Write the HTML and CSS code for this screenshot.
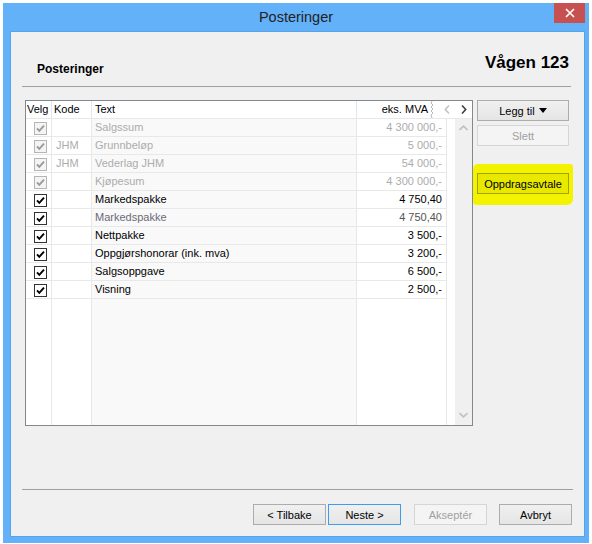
FILE: index.html
```html
<!DOCTYPE html>
<html>
<head>
<meta charset="utf-8">
<link rel="stylesheet" href="styles.css">
</head>
<body>
<div class="window">
  <div class="titlebar">
    <span class="title">Posteringer</span>
    <div class="close"><svg width="10" height="10" viewBox="0 0 10 10"><path d="M1 1 L9 9 M9 1 L1 9" stroke="#fff" stroke-width="1.7" fill="none"/></svg></div>
  </div>
  <div class="client">
    <div class="head">
      <div class="label">Posteringer</div>
      <div class="name">Vågen 123</div>
    </div>
    <div class="main">
      <div class="grid">
        <div class="ghead">
          <div class="hc h-velg">Velg</div>
          <div class="hc h-kode">Kode</div>
          <div class="hc h-text">Text</div>
          <div class="hc h-mva"><span>eks. MVA</span><svg class="wavy" width="4" height="17" viewBox="0 0 4 17"><path d="M2 0 L1 2 L3 4 L1 6 L3 8 L1 10 L3 12 L1 14 L2 17" stroke="#b8b8b8" stroke-width="1" fill="none"/></svg></div>
          <div class="h-nav">
            <svg width="6" height="9" viewBox="0 0 6 9"><path d="M5 0.5 L1.3 4.5 L5 8.5" stroke="#c4c4c4" stroke-width="1.6" fill="none"/></svg>
            <svg width="6" height="9" viewBox="0 0 6 9"><path d="M1 0.5 L4.7 4.5 L1 8.5" stroke="#404040" stroke-width="1.6" fill="none"/></svg>
          </div>
        </div>
        <div class="gbody">
          <div class="rows">
            <div class="row dis"><div class="c-velg"><svg class="cb" viewBox="0 0 13 13"><rect x="0.5" y="0.5" width="12" height="12"/><path d="M3 6.3 L5.3 8.8 L10 3.6"/></svg></div><div class="c-kode"></div><div class="c-text">Salgssum</div><div class="c-mva">4 300 000,-</div></div>
            <div class="row dis"><div class="c-velg"><svg class="cb" viewBox="0 0 13 13"><rect x="0.5" y="0.5" width="12" height="12"/><path d="M3 6.3 L5.3 8.8 L10 3.6"/></svg></div><div class="c-kode">JHM</div><div class="c-text">Grunnbeløp</div><div class="c-mva">5 000,-</div></div>
            <div class="row dis"><div class="c-velg"><svg class="cb" viewBox="0 0 13 13"><rect x="0.5" y="0.5" width="12" height="12"/><path d="M3 6.3 L5.3 8.8 L10 3.6"/></svg></div><div class="c-kode">JHM</div><div class="c-text">Vederlag JHM</div><div class="c-mva">54 000,-</div></div>
            <div class="row dis"><div class="c-velg"><svg class="cb" viewBox="0 0 13 13"><rect x="0.5" y="0.5" width="12" height="12"/><path d="M3 6.3 L5.3 8.8 L10 3.6"/></svg></div><div class="c-kode"></div><div class="c-text">Kjøpesum</div><div class="c-mva">4 300 000,-</div></div>
            <div class="row"><div class="c-velg"><svg class="cb" viewBox="0 0 13 13"><rect x="0.5" y="0.5" width="12" height="12"/><path d="M3 6.3 L5.3 8.8 L10 3.6"/></svg></div><div class="c-kode"></div><div class="c-text">Markedspakke</div><div class="c-mva">4 750,40</div></div>
            <div class="row semi"><div class="c-velg"><svg class="cb" viewBox="0 0 13 13"><rect x="0.5" y="0.5" width="12" height="12"/><path d="M3 6.3 L5.3 8.8 L10 3.6"/></svg></div><div class="c-kode"></div><div class="c-text">Markedspakke</div><div class="c-mva">4 750,40</div></div>
            <div class="row"><div class="c-velg"><svg class="cb" viewBox="0 0 13 13"><rect x="0.5" y="0.5" width="12" height="12"/><path d="M3 6.3 L5.3 8.8 L10 3.6"/></svg></div><div class="c-kode"></div><div class="c-text">Nettpakke</div><div class="c-mva">3 500,-</div></div>
            <div class="row"><div class="c-velg"><svg class="cb" viewBox="0 0 13 13"><rect x="0.5" y="0.5" width="12" height="12"/><path d="M3 6.3 L5.3 8.8 L10 3.6"/></svg></div><div class="c-kode"></div><div class="c-text">Oppgjørshonorar (ink. mva)</div><div class="c-mva">3 200,-</div></div>
            <div class="row"><div class="c-velg"><svg class="cb" viewBox="0 0 13 13"><rect x="0.5" y="0.5" width="12" height="12"/><path d="M3 6.3 L5.3 8.8 L10 3.6"/></svg></div><div class="c-kode"></div><div class="c-text">Salgsoppgave</div><div class="c-mva">6 500,-</div></div>
            <div class="row"><div class="c-velg"><svg class="cb" viewBox="0 0 13 13"><rect x="0.5" y="0.5" width="12" height="12"/><path d="M3 6.3 L5.3 8.8 L10 3.6"/></svg></div><div class="c-kode"></div><div class="c-text">Visning</div><div class="c-mva">2 500,-</div></div>
          </div>
          <div class="vscroll">
            <svg width="9" height="6" viewBox="0 0 9 6"><path d="M0.5 5 L4.5 1.2 L8.5 5" stroke="#c0c0c0" stroke-width="1.6" fill="none"/></svg>
            <svg width="9" height="6" viewBox="0 0 9 6"><path d="M0.5 1 L4.5 4.8 L8.5 1" stroke="#c0c0c0" stroke-width="1.6" fill="none"/></svg>
          </div>
        </div>
      </div>
      <div class="side">
        <button class="btn">Legg til <span class="tri"></span></button>
        <button class="btn disabled slett">Slett</button>
        <div class="hl"><button class="btn hlbtn">Oppdragsavtale</button></div>
      </div>
    </div>
    <div class="foot-sep"></div>
    <div class="foot">
      <button class="btn fb tilbake">&lt; Tilbake</button>
      <button class="btn fb neste">Neste &gt;</button>
      <button class="btn fb disabled aksepter">Akseptér</button>
      <button class="btn fb">Avbryt</button>
    </div>
  </div>
</div>
</body>
</html>
```

FILE: styles.css
```css
* { box-sizing: border-box; }
html, body { margin: 0; padding: 0; }
body {
  width: 592px;
  height: 544px;
  overflow: hidden;
  background: #ffffff;
  padding: 3px 0 0 3px;
  font-family: "Liberation Sans", Arial, sans-serif;
  font-size: 11px;
  color: #000;
}
.window {
  width: 586px;
  height: 540px;
  background: #63b1f9;
  display: flex;
  flex-direction: column;
}
.titlebar {
  height: 29px;
  position: relative;
  text-align: center;
  line-height: 29px;
  font-size: 14.5px;
  color: #222;
}
.close {
  position: absolute;
  top: 0;
  right: 4px;
  width: 31px;
  height: 20px;
  background: #c75050;
  display: flex;
  align-items: center;
  justify-content: center;
}
.close svg { display: block; }
.client {
  flex: 1;
  margin: 0 5px 7px 8px;
  background: #f0f0f0;
  display: flex;
  flex-direction: column;
  box-shadow: 0 0 0 1px #57a3ea;
}
.head {
  display: flex;
  justify-content: space-between;
  align-items: flex-end;
  height: 55px;
  margin: 0 13px 0 11px;
  padding: 0 2px 0 15px;
  border-bottom: 1px solid #a0a0a0;
}
.label {
  font-weight: bold;
  font-size: 12px;
  line-height: 14px;
  margin-bottom: 10px;
}
.name {
  font-weight: bold;
  font-size: 17px;
  line-height: 20px;
  margin-bottom: 13px;
}
.main {
  display: flex;
  margin: 13px 0 0 14px;
  height: 326px;
}
.grid {
  width: 448px;
  height: 326px;
  border: 1px solid #828790;
  background: #fff;
  display: flex;
  flex-direction: column;
}
.ghead {
  display: flex;
  height: 18px;
  border-bottom: 1px solid #e8e8e8;
  flex-shrink: 0;
}
.hc {
  line-height: 17px;
  border-right: 1px solid #dde7f3;
  white-space: nowrap;
}
.h-velg { width: 26px; padding-left: 1px; }
.h-kode { width: 40px; padding-left: 2px; }
.h-text { width: 265px; padding-left: 3px; }
.h-mva {
  width: 77px;
  border-right: none;
  display: flex;
  justify-content: flex-end;
  align-items: center;
}
.wavy { display: block; margin-left: 2px; }
.h-nav {
  flex: 1;
  display: flex;
  align-items: center;
  padding-left: 10px;
  gap: 11px;
}
.h-nav svg { display: block; }
.gbody { flex: 1; display: flex; }
.rows {
  width: 429px;
  background: linear-gradient(to right,
    #fff 0 25px, #e8e8e8 25px 26px,
    #fff 26px 65px, #e8e8e8 65px 66px,
    #f9f9f9 66px 330px, #e8e8e8 330px 331px,
    #fff 331px 420px, #e8e8e8 420px 421px,
    #fff 421px);
}
.row {
  display: flex;
  height: 18px;
  width: 421px;
  border-bottom: 1px solid #e8e8e8;
  line-height: 17px;
  white-space: nowrap;
}
.c-velg { width: 26px; padding: 3px 0 0 8px; }
.c-kode { width: 40px; padding-left: 4px; }
.c-text { width: 265px; padding-left: 3px; }
.c-mva { width: 90px; text-align: right; padding-right: 5px; }
.cb { display: block; width: 13px; height: 13px; }
.cb rect { fill: #fff; stroke: #333; }
.cb path { fill: none; stroke: #000; stroke-width: 1.9; }
.dis { color: #acacac; }
.dis .cb rect { fill: #f4f4f4; stroke: #b5b5b5; }
.dis .cb path { stroke: #9a9a9a; }
.semi .c-text { color: #6a6a78; }
.semi .c-mva { color: #555; }
.vscroll {
  width: 17px;
  background: #f0f0f0;
  display: flex;
  flex-direction: column;
  justify-content: space-between;
  align-items: center;
  padding: 6px 0 7px;
}
.vscroll svg { display: block; }
.side {
  margin-left: 4px;
  width: 92px;
  display: flex;
  flex-direction: column;
}
.btn {
  height: 21px;
  border: 1px solid #acacac;
  background: linear-gradient(#f0f0f0, #e5e5e5);
  font-family: "Liberation Sans", Arial, sans-serif;
  font-size: 11px;
  color: #000;
  padding: 0;
  margin: 0;
  display: flex;
  align-items: center;
  justify-content: center;
  gap: 4px;
}
.side .btn { width: 92px; }
.tri {
  display: inline-block;
  width: 0;
  height: 0;
  border-left: 4.5px solid transparent;
  border-right: 4.5px solid transparent;
  border-top: 5px solid #000;
}
.disabled {
  border-color: #d5d5d5;
  background: #f4f4f4;
  color: #a0a0a0;
}
.slett { margin-top: 4px; }
.hl {
  margin: 18px 0 0 -4px;
  width: 100px;
  padding: 9px 4px 11px;
  background: #f3f300;
  border-radius: 5px 3px 6px 4px;
}
.hlbtn {
  background: #e9e900;
  border-color: #a3a300;
}
.foot-sep {
  margin: 63px 11px 0 11px;
  border-top: 1px solid #a0a0a0;
}
.foot {
  display: flex;
  justify-content: flex-end;
  margin-top: 14px;
  padding-right: 12px;
}
.fb { width: 73px; }
.tilbake { margin-right: 2px; }
.neste { margin-right: 13px; border-color: #3c9cf2; }
.aksepter { margin-right: 12px; }
```
